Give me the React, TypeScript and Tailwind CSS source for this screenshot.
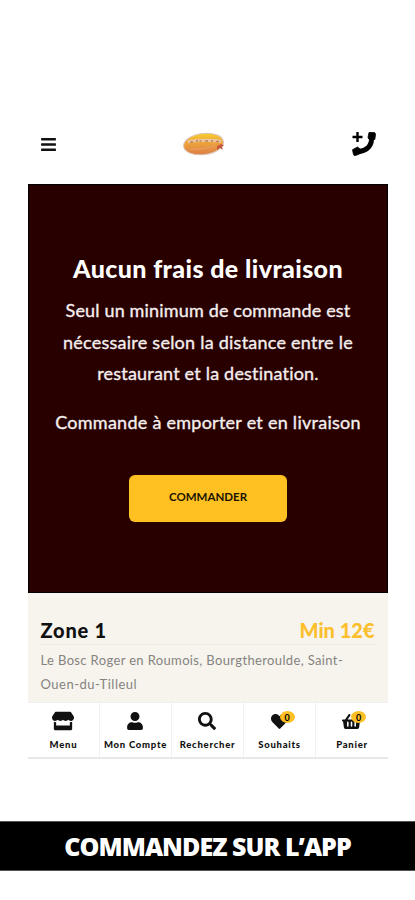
import { FaBars, FaHeart, FaSearch, FaShoppingBasket, FaStore, FaUser } from "react-icons/fa";
import type { ReactNode } from "react";

interface NavItemProps {
  label: string;
  icon: ReactNode;
  count?: number;
}

function NavItem({ label, icon, count }: NavItemProps) {
  return (
    <a className="flex h-full w-[72px] flex-col items-center border-r border-[#f0f0f0] pt-[8px] last:border-r-0">
      <span className="relative flex h-[20px] items-center justify-center text-[#111]">
        {icon}
        {count !== undefined && (
          <span className="absolute top-0 left-[9px] flex h-[12px] w-[15px] items-center justify-center rounded-[50%] bg-[#fdbf23] text-[9px] font-bold leading-none text-black">
            {count}
          </span>
        )}
      </span>
      <span className="mt-[8px] whitespace-nowrap pl-px text-[9.5px] leading-[12px] font-black tracking-[0.75px] text-[#111]">{label}</span>
    </a>
  );
}

function Logo() {
  return (
    <svg width="42" height="24" viewBox="0 0 42 24">
      <defs>
        <linearGradient id="oval" x1="0.6" y1="0" x2="0.4" y2="1">
          <stop offset="0" stopColor="#f8d22c" />
          <stop offset="0.35" stopColor="#f0ab38" />
          <stop offset="1" stopColor="#dc7d46" />
        </linearGradient>
      </defs>
      <ellipse cx="20.5" cy="12" rx="20" ry="10.6" transform="rotate(-7 20.5 12)" fill="url(#oval)" stroke="#dcc4b8" />
      <path d="M5 10c7-2 11-1.5 16-1.5s11-.5 17 1" fill="none" stroke="#ecc6a4" strokeWidth="3" />
      <path d="M7 10h3M13 9h2M16.5 9h2M22 9h3M28 9h2M33 9.5h3" stroke="#b98055" strokeWidth="1.5" />
      <path d="M7 17c6 1 14 0 25-3" fill="none" stroke="#e99a5c" strokeWidth="1.5" />
      <path d="M34 14l4-2 3 1-2 2 1 3-3-2-3 2z" fill="#c85a40" />
    </svg>
  );
}

function CallIcon() {
  return (
    <svg width="25" height="26" viewBox="0 0 25 26" className="text-black">
      <path d="M6.5 1v10M1.5 6h10" stroke="currentColor" strokeWidth="2.4" />
      <path d="M20.5 5C21.5 14 16.5 19.500 7.5 20.5" fill="none" stroke="currentColor" strokeWidth="5" />
      <path
        d="M18 1.5L23 1.5Q24.5 1.5 24.5 3.5L23.8 8.5L19.5 9Q17.2 8.5 17 6.2Z M6.5 16L10.5 19.2L9.5 22.5L4.5 24.5Q3 25 2.5 23.5L1.5 18.7Z"
        fill="currentColor"
        stroke="currentColor"
        strokeLinejoin="round"
        strokeWidth="0.8"
      />
    </svg>
  );
}

export default function App() {
  return (
    <div className="flex h-[900px] w-[415px] flex-col bg-white font-['Lato',sans-serif]">
      <div className="mx-auto mt-[104px] flex h-[655px] w-[360px] flex-col">
        <header className="flex h-[80px] items-center justify-between px-[12px]">
          <FaBars size={17} className="text-[#111]" />
          <div className="ml-px">
            <Logo />
          </div>
          <CallIcon />
        </header>

        {/* Delivery banner */}
        <section className="flex h-[409px] flex-col items-center border border-black bg-[#290000] pl-px text-center text-white">
          <h1 className="mt-[66px] whitespace-nowrap text-[25px] leading-[34px] font-black tracking-[0.4px]">Aucun frais de livraison</h1>
          <div className="mt-[10px] text-[18px] leading-[31.5px] text-[#f4eeee] [-webkit-text-stroke:0.35px]">
            <p className="whitespace-nowrap tracking-[0.16px]">Seul un minimum de commande est</p>
            <p className="whitespace-nowrap tracking-[0.24px]">nécessaire selon la distance entre le</p>
            <p className="whitespace-nowrap tracking-[0.2px]">restaurant et la destination.</p>
          </div>
          <p className="mt-[17px] whitespace-nowrap text-[18px] leading-[31.5px] tracking-[0.26px] text-[#f4eeee] [-webkit-text-stroke:0.35px]">
            Commande à emporter et en livraison
          </p>
          <button className="mt-[37px] h-[47px] w-[158px] rounded-[6px] bg-[#ffc021] pb-[3px] text-[11.5px] font-bold text-[#1b1400]">COMMANDER</button>
        </section>

        {/* Delivery zone */}
        <section className="h-[109px] bg-[#f7f4ee] px-[13px] pt-[22px]">
          <div className="flex h-[30px] items-center justify-between border-b border-dotted border-[#e2dfd9] text-[20px] font-black">
            <h2 className="tracking-[0.8px] text-[#111]">Zone 1</h2>
            <span className="text-[#fbbf2d]">Min 12€</span>
          </div>
          <p className="mt-[3px] text-[13px] leading-[24px] text-[#858380]">
            <span className="block whitespace-nowrap tracking-[0.36px]">Le Bosc Roger en Roumois, Bourgtheroulde, Saint-</span>
            <span className="block tracking-[0.5px]">Ouen-du-Tilleul</span>
          </p>
        </section>

        <nav className="flex h-[57px] border-t border-b-2 border-t-[#efefef] border-b-[#e8e8e8] bg-white">
          <NavItem label="Menu" icon={<FaStore size={22} />} />
          <NavItem label="Mon Compte" icon={<FaUser size={18} />} />
          <NavItem label="Rechercher" icon={<FaSearch size={18} />} />
          <NavItem label="Souhaits" icon={<FaHeart size={17} />} count={0} />
          <NavItem label="Panier" icon={<FaShoppingBasket size={19} />} count={0} />
        </nav>
      </div>

      <footer className="mt-[62px] flex h-[50px] items-center justify-center border-y border-[#555] bg-black pt-[2px] font-['Open_Sans',sans-serif] text-[25px] font-extrabold text-white">
        <span className="whitespace-nowrap tracking-[-0.95px]">COMMANDEZ SUR L’APP</span>
      </footer>
    </div>
  );
}
